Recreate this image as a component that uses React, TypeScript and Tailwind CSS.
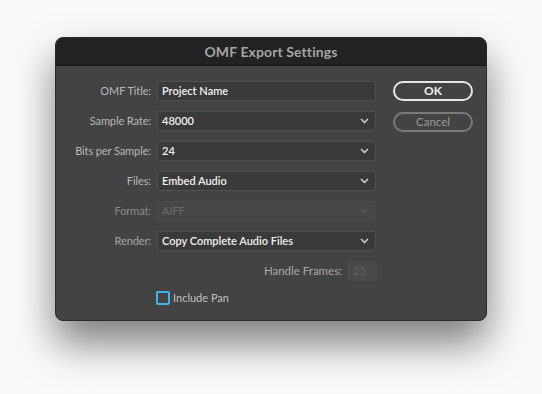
import React from "react";

const font = { fontFamily: "Lato, 'Open Sans', sans-serif" };

function Chevron({ dim }: { dim?: boolean }) {
  return (
    <svg width="9" height="6" viewBox="0 0 9 6" className="shrink-0">
      <path d="M1 1 L4.5 4.5 L8 1" fill="none" stroke={dim ? "#5a5a5a" : "#d8d8d8"} strokeWidth="1.4" />
    </svg>
  );
}

function Row({
  label,
  value,
  select,
  disabled,
  labelClass,
}: {
  label: string;
  value: string;
  select?: boolean;
  disabled?: boolean;
  labelClass?: string;
}) {
  return (
    <div className="flex items-center h-[20px]">
      <div className={`w-[96px] text-right text-[11px] tracking-[-0.1px] pr-[1px] ${labelClass ?? "text-[#b8b8b8]"}`}>{label}</div>
      <div
        className={`ml-[5px] w-[219px] h-[20px] rounded-[2px] border flex items-center justify-between pl-[4px] pr-[6px] ${
          disabled ? "bg-[#464646] border-[#4a4a4a]" : "bg-[#3a3a3a] border-[#505050]"
        }`}
      >
        <span className={`text-[11px] ${disabled ? "text-[#6e6e6e] font-normal" : "text-[#f0f0f0] font-semibold"}`}>{value}</span>
        {select && <Chevron dim={disabled} />}
      </div>
    </div>
  );
}

export default function App() {
  return (
    <div className="w-[542px] h-[394px] bg-[#fafafa] pt-[37px] pl-[55px]" style={font}>
      <div className="w-[432px] h-[284px] rounded-[8px] border border-[#2a2a2a] bg-[#434343] overflow-hidden shadow-[0_22px_40px_rgba(0,0,0,0.5)] flex flex-col">
        <div className="h-[28px] bg-[#222222] border-b border-[#141414] flex items-center justify-center">
          <span className="text-[14px] font-bold text-[#a4a4a4] tracking-[0.1px]">OMF Export Settings</span>
        </div>
        <div className="flex pt-[15px]">
          <div className="flex flex-col gap-[10px]">
            <Row label="OMF Title:" value="Project Name" />
            <Row label="Sample Rate:" value="48000" select />
            <Row label="Bits per Sample:" value="24" select />
            <Row label="Files:" value="Embed Audio" select />
            <Row label="Format:" value="AIFF" select disabled labelClass="text-[#8c8c8c]" />
            <Row label="Render:" value="Copy Complete Audio Files" select labelClass="text-[#a6a6a6]" />
            <div className="flex items-center justify-end h-[20px] w-[321px]">
              <span className="text-[11.5px] text-[#a8a8a8] mr-[5px]">Handle Frames:</span>
              <div className="w-[30px] h-[20px] rounded-[2px] bg-[#494949] flex items-center pl-[6px]">
                <span className="text-[11px] text-[#636363]">25</span>
              </div>
            </div>
            <div className="flex items-center h-[14px] pl-[100px]">
              <div className="w-[14px] h-[14px] rounded-[2px] border-2 border-[#3fb4f0]" />
              <span className="ml-[3px] text-[11px] text-[#c0c0c0]">Include Pan</span>
            </div>
          </div>
          <div className="ml-[16px] flex flex-col gap-[11px]">
            <div className="w-[80px] h-[20px] rounded-full border-2 border-[#e6e6e6] flex items-center justify-center">
              <span className="text-[12px] font-bold text-[#f2f2f2]">OK</span>
            </div>
            <div className="w-[80px] h-[20px] rounded-full border-2 border-[#7a7a7a] flex items-center justify-center">
              <span className="text-[11.5px] text-[#9a9a9a]">Cancel</span>
            </div>
          </div>
        </div>
      </div>
    </div>
  );
}
